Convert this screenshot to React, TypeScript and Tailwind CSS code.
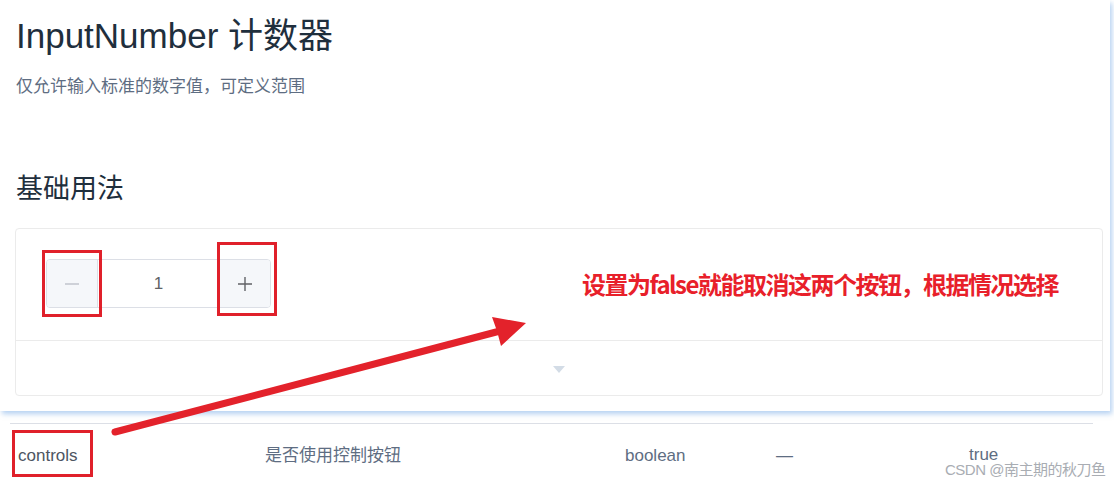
import React from 'react';

const font = { fontFamily: '"Liberation Sans", Arial, "Noto Sans CJK SC", sans-serif' };

function InputNumber() {
  return (
    <div className="flex h-[49px] w-[225px] rounded-[4px] border border-[#dcdfe6] bg-white overflow-hidden">
      <div className="flex w-[51px] items-center justify-center border-r border-[#dcdfe6] bg-[#f5f7fa]">
        <svg width="16" height="16" viewBox="0 0 16 16">
          <path d="M1 8h14" stroke="#c0c4cc" strokeWidth="1.4" />
        </svg>
      </div>
      <div className="flex flex-1 items-center justify-center text-[17px] text-[#606266]">1</div>
      <div className="flex w-[51px] items-center justify-center border-l border-[#dcdfe6] bg-[#f5f7fa]">
        <svg width="16" height="16" viewBox="0 0 16 16">
          <path d="M1 8h14M8 1v14" stroke="#606266" strokeWidth="1.4" />
        </svg>
      </div>
    </div>
  );
}

export default function App() {
  return (
    <div className="relative h-[488px] w-[1114px] overflow-hidden bg-white" style={font}>
      <div className="w-[1110px] bg-white px-[15px] pb-[15px] pt-[14px] shadow-[2px_3px_5px_rgba(110,165,230,0.5)]">
        <h1 className="pl-px text-[35px] leading-[44px] text-[#1f2f3d]">InputNumber 计数器</h1>
        <p className="mt-[17px] pl-px text-[17px] leading-[24px] text-[#5e6d82]">仅允许输入标准的数字值，可定义范围</p>
        <h2 className="mt-[72px] pl-px text-[27px] leading-[36px] text-[#1f2f3d]">基础用法</h2>
        <div className="mt-[21px] w-[1088px] rounded-[4px] border border-[#ebebeb]">
          <div className="border-b border-[#ebebeb] px-[30px] pb-[32px] pt-[30px]">
            <InputNumber />
          </div>
          <div className="flex h-[54px] items-center justify-center">
            <svg width="14" height="10" viewBox="0 0 14 10" className="mt-[2px]">
              <path d="M1 2h12L7 9z" fill="#d3dce6" />
            </svg>
          </div>
        </div>
      </div>

      <div className="ml-[10px] mt-[12px] w-[1083px] border-y border-[#dcdfe6]">
        <div className="flex h-[64px] items-center text-[17px] text-[#5e6d82]">
          <div className="w-[255px] pl-[8px] text-[#4d5562]">controls</div>
          <div className="w-[360px]">是否使用控制按钮</div>
          <div className="w-[151px]">boolean</div>
          <div className="w-[193px]">—</div>
          <div className="-mt-[2px]">true</div>
        </div>
      </div>

      <div className="pointer-events-none absolute left-[945px] top-[459px] whitespace-nowrap text-[15px] tracking-[-0.5px] text-[#a9adb3]">
        CSDN @南主期的秋刀鱼
      </div>

      <div className="absolute left-[42px] top-[250px] h-[67px] w-[60px] border-[3px] border-[#e0202a]" />
      <div className="absolute left-[217px] top-[242px] h-[74px] w-[60px] border-[3px] border-[#e0202a]" />
      <div className="absolute left-[12px] top-[430px] h-[47px] w-[81px] border-[3px] border-[#e0202a]" />

      <div
        className="absolute left-[582px] top-[269px] whitespace-nowrap text-[24px] font-bold leading-[30px] text-[#e8202a] [text-shadow:0_0_2px_#fff,0_0_3px_#fff]"
        style={{ fontFamily: '"Noto Sans CJK SC", "Liberation Sans", sans-serif', letterSpacing: '-1.5px' }}
      >
        设置为false就能取消这两个按钮，根据情况选择
      </div>

      <svg className="pointer-events-none absolute left-0 top-0" width="1114" height="488" viewBox="0 0 1114 488">
        <line x1="115" y1="432" x2="500" y2="331" stroke="#e3222b" strokeWidth="7" strokeLinecap="round" />
        <polygon points="526,323 492,317 497,331 501,346" fill="#e3222b" />
      </svg>
    </div>
  );
}
